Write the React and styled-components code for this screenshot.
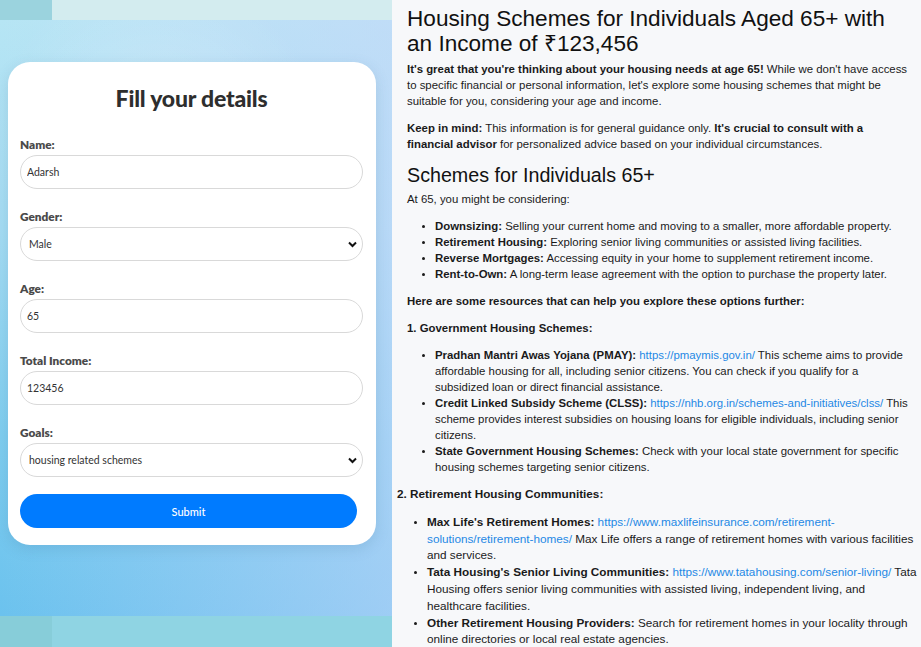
import React from "react";
import styled, { createGlobalStyle } from "styled-components";

const Global = createGlobalStyle`
  html, body { margin: 0; padding: 0; height: 100%; }
  body { font-family: "Liberation Sans", Arial, sans-serif; overflow: hidden; }
  #root { height: 100%; }
`;

const Page = styled.div`
  display: grid;
  grid-template-columns: 392px 1fr;
  height: 647px;
  width: 921px;
  overflow: hidden;
`;

const LeftPane = styled.div`
  display: grid;
  grid-template-rows: 20px 1fr 31px;
  height: 647px;
`;

const Strip = styled.div`
  display: grid;
  grid-template-columns: 52px 1fr;
  & > div:first-child { background: ${(p) => p.$corner}; }
  & > div:last-child { background: ${(p) => p.$fill}; }
`;

const Backdrop = styled.div`
  background:
    radial-gradient(ellipse 60% 40% at 40% 20%, rgba(255,255,255,0.25), rgba(255,255,255,0) 70%),
    linear-gradient(90deg, rgba(180,230,243,0) 0%, rgba(200,214,250,0.55) 100%),
    linear-gradient(180deg, #b6e5f4 0%, #a5dcf3 35%, #7fcdef 70%, #6bc2ee 100%);
  padding: 42px 17px 0 8px;
`;

const Card = styled.form`
  background: #fff;
  border-radius: 22px;
  box-shadow: 0 4px 14px rgba(60, 110, 150, 0.18);
  padding: 22px 13px 17px 12px;
  display: flex;
  flex-direction: column;
`;

const Title = styled.h2`
  margin: 0 0 26px;
  text-align: center;
  font-family: "Lato", "Open Sans", sans-serif;
  font-weight: 900;
  font-size: 23px;
  line-height: 28px;
  color: #2e2e2e;
  letter-spacing: -0.2px;
`;

const Field = styled.div`
  display: flex;
  flex-direction: column;
  margin-bottom: 21px;
`;

const Label = styled.label`
  font-family: "Lato", "Open Sans", sans-serif;
  font-weight: 800;
  font-size: 11.8px;
  color: #4a4a4a;
  line-height: 14px;
  margin-bottom: 3px;
`;

const controlCss = `
  box-sizing: border-box;
  width: 343px;
  height: 34px;
  border: 1px solid #d9d9d9;
  border-radius: 17px;
  background: #fff;
  font-family: "Lato", "Open Sans", sans-serif;
  font-size: 10.5px;
  color: #333;
  outline: none;
`;

const Input = styled.input`
  ${controlCss}
  padding: 0 6px;
`;

const SelectWrap = styled.div`
  position: relative;
  width: 343px;
`;

const Select = styled.select`
  ${controlCss}
  appearance: none;
  padding: 0 24px 0 8px;
`;

const Chevron = styled.svg`
  position: absolute;
  right: 6px;
  top: 14px;
  pointer-events: none;
`;

const Submit = styled.button`
  margin-top: -4px;
  width: 337px;
  height: 34px;
  border: none;
  border-radius: 17px;
  background: #007bff;
  color: #fff;
  font-family: "Lato", "Open Sans", sans-serif;
  font-size: 11px;
  font-weight: 500;
`;

const RightPane = styled.div`
  background: #f7f8fa;
  padding: 6px 11px 0 15px;
  color: #1a1a1a;
  font-size: 11.4px;
  line-height: 16px;
  overflow: hidden;
`;

const H1 = styled.h1`
  margin: 0 0 5px;
  font-weight: 400;
  font-size: 22.6px;
  line-height: 25px;
  color: #111;
`;

const H2 = styled.h2`
  margin: 0 0 4px;
  font-weight: 400;
  font-size: 19.7px;
  line-height: 24px;
  color: #111;
`;

const P = styled.p`
  margin: 0 0 11px;
`;

const List = styled.ul`
  margin: 0 0 11px;
  padding-left: 28px;
  list-style: disc;
  & li::marker { font-size: 10px; }
`;

const Outdent = styled.div`
  margin-left: -10px;
  margin-right: -10px;
  font-size: 11.75px;
  line-height: 16.8px;
  & ${List} { padding-left: 30px; }
`;

const A = styled.a`
  color: #1e88e5;
  text-decoration: none;
`;

const Field2 = ({ label, children }) => (
  <Field>
    <Label>{label}</Label>
    {children}
  </Field>
);

const SelectBox = ({ value, options }) => (
  <SelectWrap>
    <Select defaultValue={value}>
      {options.map((o) => (
        <option key={o}>{o}</option>
      ))}
    </Select>
    <Chevron width="9" height="7" viewBox="0 0 9 7">
      <path d="M1 1.5 L4.5 5 L8 1.5" fill="none" stroke="#111" strokeWidth="2" />
    </Chevron>
  </SelectWrap>
);

export default function App() {
  return (
    <Page>
      <Global />
      <LeftPane>
        <Strip $corner="#9bd3de" $fill="#d3ecef">
          <div />
          <div />
        </Strip>
        <Backdrop>
          <Card onSubmit={(e) => e.preventDefault()}>
            <Title>Fill your details</Title>
            <Field2 label="Name:">
              <Input defaultValue="Adarsh" />
            </Field2>
            <Field2 label="Gender:">
              <SelectBox value="Male" options={["Male", "Female", "Other"]} />
            </Field2>
            <Field2 label="Age:">
              <Input defaultValue="65" />
            </Field2>
            <Field2 label="Total Income:">
              <Input defaultValue="123456" />
            </Field2>
            <Field2 label="Goals:">
              <SelectBox
                value="housing related schemes"
                options={["housing related schemes", "retirement schemes"]}
              />
            </Field2>
            <Submit type="submit">Submit</Submit>
          </Card>
        </Backdrop>
        <Strip $corner="#87cdd9" $fill="#8fd4e3">
          <div />
          <div />
        </Strip>
      </LeftPane>
      <RightPane>
        <H1>Housing Schemes for Individuals Aged 65+ with an Income of ₹123,456</H1>
        <P>
          <b>It's great that you're thinking about your housing needs at age 65!</b> While we
          don't have access to specific financial or personal information, let's explore some
          housing schemes that might be suitable for you, considering your age and income.
        </P>
        <P>
          <b>Keep in mind:</b> This information is for general guidance only.{" "}
          <b>It's crucial to consult with a financial advisor</b> for personalized advice based
          on your individual circumstances.
        </P>
        <H2>Schemes for Individuals 65+</H2>
        <P>At 65, you might be considering:</P>
        <List>
          <li>
            <b>Downsizing:</b> Selling your current home and moving to a smaller, more affordable
            property.
          </li>
          <li>
            <b>Retirement Housing:</b> Exploring senior living communities or assisted living
            facilities.
          </li>
          <li>
            <b>Reverse Mortgages:</b> Accessing equity in your home to supplement retirement
            income.
          </li>
          <li>
            <b>Rent-to-Own:</b> A long-term lease agreement with the option to purchase the
            property later.
          </li>
        </List>
        <P>
          <b>Here are some resources that can help you explore these options further:</b>
        </P>
        <P>
          <b>1. Government Housing Schemes:</b>
        </P>
        <List>
          <li>
            <b>Pradhan Mantri Awas Yojana (PMAY):</b>{" "}
            <A href="#">https://pmaymis.gov.in/</A> This scheme aims to provide affordable
            housing for all, including senior citizens. You can check if you qualify for a
            subsidized loan or direct financial assistance.
          </li>
          <li>
            <b>Credit Linked Subsidy Scheme (CLSS):</b>{" "}
            <A href="#">https://nhb.org.in/schemes-and-initiatives/clss/</A> This scheme provides
            interest subsidies on housing loans for eligible individuals, including senior
            citizens.
          </li>
          <li>
            <b>State Government Housing Schemes:</b> Check with your local state government for
            specific housing schemes targeting senior citizens.
          </li>
        </List>
        <Outdent>
          <P>
            <b>2. Retirement Housing Communities:</b>
          </P>
          <List>
            <li>
              <b>Max Life's Retirement Homes:</b>{" "}
              <A href="#">https://www.maxlifeinsurance.com/retirement-solutions/retirement-homes/</A>{" "}
              Max Life offers a range of retirement homes with various facilities and services.
            </li>
            <li>
              <b>Tata Housing's Senior Living Communities:</b>{" "}
              <A href="#">https://www.tatahousing.com/senior-living/</A> Tata Housing offers
              senior living communities with assisted living, independent living, and healthcare
              facilities.
            </li>
            <li>
              <b>Other Retirement Housing Providers:</b> Search for retirement homes in your
              locality through online directories or local real estate agencies.
            </li>
          </List>
        </Outdent>
      </RightPane>
    </Page>
  );
}
